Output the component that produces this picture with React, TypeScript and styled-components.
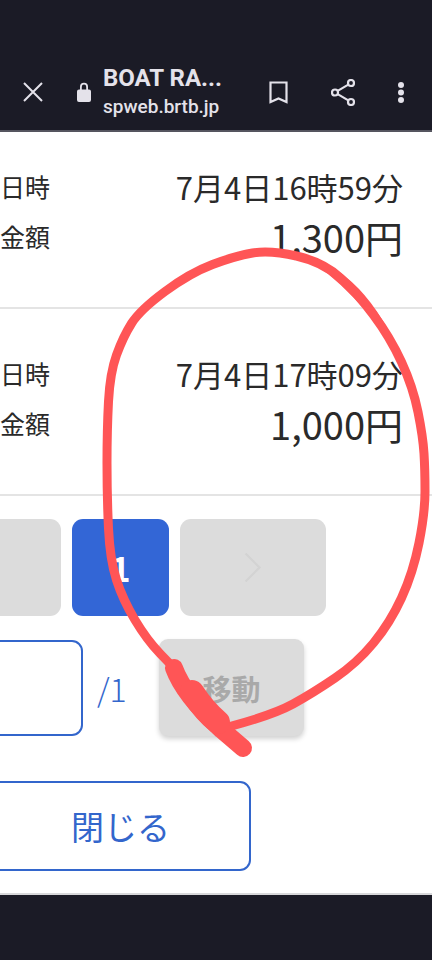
import styled, { createGlobalStyle } from "styled-components";

const GlobalStyle = createGlobalStyle`
  html, body {
    margin: 0;
    padding: 0;
    background: #1b1b26;
  }
  body {
    font-family: "Noto Sans CJK JP", "Noto Sans", sans-serif;
  }
`;

const Screen = styled.div`
  position: relative;
  width: 432px;
  height: 960px;
  overflow: hidden;
  display: flex;
  flex-direction: column;
  background: #1b1b26;
`;

const TopBar = styled.div`
  height: 132px;
  flex: none;
  box-sizing: border-box;
  padding: 54px 28px 0 23px;
  display: flex;
  align-items: center;
  border-bottom: 2px solid #55555f;
  color: #e4e2ea;
`;

const UrlBlock = styled.div`
  margin-left: 12px;
  display: flex;
  flex-direction: column;
  font-family: Roboto, sans-serif;
`;

const PageTitle = styled.div`
  font-size: 24px;
  font-weight: 700;
  line-height: 30px;
  white-space: nowrap;
`;

const PageUrl = styled.div`
  font-size: 19px;
  font-weight: 500;
  line-height: 28px;
`;

const LockIcon = styled.svg`
  margin-left: 34px;
  flex: none;
`;

const BarActions = styled.div`
  margin-left: auto;
  display: flex;
  align-items: center;
  gap: 43px;
`;

const Content = styled.div`
  height: 763px;
  flex: none;
  background: #fff;
  border-bottom: 2px solid #d8d8da;
  box-sizing: border-box;
  overflow: hidden;
`;

const Entry = styled.div`
  height: 177px;
  box-sizing: border-box;
  padding: 29px 29px 0 0;
  border-bottom: 2px solid #e4e4e4;
  margin-bottom: 10px;
`;

const EntryRow = styled.div`
  display: flex;
  align-items: center;
  justify-content: space-between;
  height: 50px;
  color: #2a2a2a;
`;

const Label = styled.span`
  font-size: 25px;
`;

const DateText = styled.span`
  font-size: 31px;
`;

const Amount = styled.span`
  font-size: 38px;
`;

const Pager = styled.div`
  display: flex;
  gap: 11px;
  margin: 23px 0 0 -60px;
`;

const PageButton = styled.div<{ $width: number; $active?: boolean }>`
  width: ${(props) => props.$width}px;
  height: 97px;
  border-radius: 11px;
  background: ${(props) => (props.$active ? "#3366d6" : "#dcdcdc")};
  color: #fff;
  font-size: 34px;
  font-weight: 700;
  display: flex;
  align-items: center;
  justify-content: center;
`;

const JumpRow = styled.div`
  display: flex;
  align-items: center;
  margin: 23px 0 0 -60px;
`;

const PageInput = styled.div`
  width: 143px;
  height: 96px;
  box-sizing: border-box;
  border: 2px solid #3366cc;
  border-radius: 11px;
  background: #fff;
`;

const PageCount = styled.span`
  margin-left: 14px;
  width: 62px;
  color: #3366cc;
  font-size: 32px;
  font-weight: 300;
`;

const MoveButton = styled.div`
  width: 145px;
  height: 97px;
  border-radius: 9px;
  background: #dcdcdc;
  color: #a9a9a9;
  font-size: 29px;
  font-weight: 700;
  box-shadow: 0 3px 5px rgba(0, 0, 0, 0.18);
  display: flex;
  align-items: center;
  justify-content: center;
`;

const CloseButton = styled.div`
  width: 261px;
  height: 90px;
  margin: 45px 0 0 -10px;
  box-sizing: border-box;
  border: 2px solid #3366cc;
  border-radius: 11px;
  color: #3366cc;
  font-size: 33px;
  display: flex;
  align-items: center;
  justify-content: center;
`;

const Scribble = styled.svg`
  position: absolute;
  left: 0;
  top: 0;
  pointer-events: none;
`;

const entries = [
  { date: "7月4日16時59分", amount: "1,300円" },
  { date: "7月4日17時09分", amount: "1,000円" },
];

// hand drawn loop, points read off the screenshot
const loopPoints = [
  [228, 727], [273, 715], [313, 693], [357, 663], [390, 623], [413, 573],
  [425, 513], [425, 470], [423, 437], [413, 387], [390, 337], [357, 293],
  [323, 262], [270, 250], [235, 256], [190, 273], [140, 310], [123, 337],
  [110, 373], [107, 430], [107, 497], [110, 560], [123, 600], [147, 640],
  [173, 667],
];

const smoothPath = (points: number[][]) => {
  let d = `M${points[0][0]} ${points[0][1]}`;
  for (let i = 1; i < points.length - 1; i++) {
    const mx = (points[i][0] + points[i + 1][0]) / 2;
    const my = (points[i][1] + points[i + 1][1]) / 2;
    d += `Q${points[i][0]} ${points[i][1]} ${mx} ${my}`;
  }
  const last = points[points.length - 1];
  return `${d}L${last[0]} ${last[1]}`;
};

const App = () => {
  return (
    <Screen>
      <GlobalStyle />
      <TopBar>
        <svg width="20" height="20" viewBox="0 0 20 20" fill="none" stroke="#e4e2ea" strokeWidth="2">
          <path d="M1 1l18 18M19 1L1 19" />
        </svg>
        <LockIcon width="14" height="20" viewBox="0 0 14 20" fill="#e4e2ea">
          <path d="M2 7.500h1V4.800a4 4 0 0 1 8 0v2.700h1a2 2 0 0 1 2 2V18a2 2 0 0 1-2 2H2a2 2 0 0 1-2-2V9.500a2 2 0 0 1 2-2zm2.800 0h4.400V4.800a2.200 2.200 0 0 0-4.400 0v2.700z" />
        </LockIcon>
        <UrlBlock>
          <PageTitle>BOAT RA...</PageTitle>
          <PageUrl>spweb.brtb.jp</PageUrl>
        </UrlBlock>
        <BarActions>
          <svg width="19" height="23" viewBox="0 0 19 23" fill="none" stroke="#e4e2ea" strokeWidth="2.2">
            <path d="M1.500 1.500h16v19.500l-8-3.500-8 3.500z" />
          </svg>
          <svg width="24" height="27" viewBox="0 0 24 27" fill="none" stroke="#e4e2ea" strokeWidth="2.200">
            <circle cx="20" cy="4" r="3" />
            <circle cx="4" cy="13.500" r="3" />
            <circle cx="20" cy="23" r="3" />
            <path d="M6.700 11.900L17.300 5.600M6.700 15.100l10.600 6.300" />
          </svg>
          <svg width="6" height="21" viewBox="0 0 6 21" fill="#e4e2ea">
            <circle cx="3" cy="3" r="3" />
            <circle cx="3" cy="10.500" r="3" />
            <circle cx="3" cy="18" r="3" />
          </svg>
        </BarActions>
      </TopBar>
      <Content>
        {entries.map((entry) => (
          <Entry key={entry.date}>
            <EntryRow>
              <Label>日時</Label>
              <DateText>{entry.date}</DateText>
            </EntryRow>
            <EntryRow>
              <Label>金額</Label>
              <Amount>{entry.amount}</Amount>
            </EntryRow>
          </Entry>
        ))}
        <Pager>
          <PageButton $width={121} />
          <PageButton $active $width={97}>1</PageButton>
          <PageButton $width={146}>
            <svg width="18" height="31" viewBox="0 0 18 31" fill="none" stroke="#d3d3d3" strokeWidth="2.2">
              <path d="M1.500 1.500l14 14-14 14" />
            </svg>
          </PageButton>
        </Pager>
        <JumpRow>
          <PageInput />
          <PageCount>/1</PageCount>
          <MoveButton>移動</MoveButton>
        </JumpRow>
        <CloseButton>閉じる</CloseButton>
      </Content>
      <Scribble width="432" height="960" viewBox="0 0 432 960" fill="none" stroke="#ff5556" strokeLinecap="round" strokeLinejoin="round">
        <path strokeWidth="9" d={smoothPath(loopPoints)} />
        <path fill="#ff5556" stroke="none" d="M300 254Q366 270 402 360Q357 289 300 254Z" />
        <path strokeWidth="18" d="M174 668C182 690 200 710 222 730L243 748" />
        <path strokeWidth="24" d="M192 692C200 704 208 714 218 722" />
      </Scribble>
    </Screen>
  );
};

export default App;
